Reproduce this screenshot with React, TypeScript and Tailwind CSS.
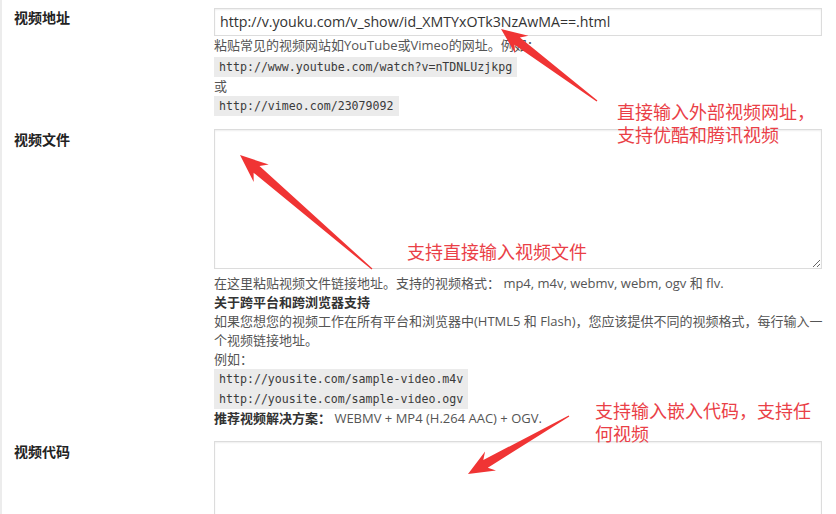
import React from "react";

type P = [number, number];

function arrowPoints(tail: P, tip: P, headLen: number, headHalf: number, shaftHalf: number): string {
  const dx = tip[0] - tail[0];
  const dy = tip[1] - tail[1];
  const len = Math.hypot(dx, dy);
  const ux = dx / len;
  const uy = dy / len;
  const nx = -uy;
  const ny = ux;
  const bx = tip[0] - ux * headLen;
  const by = tip[1] - uy * headLen;
  const bx2 = tip[0] - ux * (headLen * 0.78);
  const by2 = tip[1] - uy * (headLen * 0.78);
  const pts: P[] = [
    [tail[0] + nx * 0.6, tail[1] + ny * 0.6],
    [bx2 + nx * shaftHalf, by2 + ny * shaftHalf],
    [bx + nx * headHalf, by + ny * headHalf],
    [tip[0], tip[1]],
    [bx - nx * headHalf, by - ny * headHalf],
    [bx2 - nx * shaftHalf, by2 - ny * shaftHalf],
    [tail[0] - nx * 0.6, tail[1] - ny * 0.6],
  ];
  return pts.map((p) => `${p[0].toFixed(1)},${p[1].toFixed(1)}`).join(" ");
}

const arrows = [
  arrowPoints([595, 101], [499, 29], 26, 11, 4.5),
  arrowPoints([370, 269], [238, 155], 28, 11.5, 4.5),
  arrowPoints([567, 416], [466, 474], 26, 11, 4.5),
];

const bodyFont = { fontFamily: '"Open Sans", "Noto Sans CJK SC", sans-serif' };
const cjkFont = { fontFamily: '"Noto Sans CJK SC", "Open Sans", sans-serif' };

function Code({ children }: { children: React.ReactNode }) {
  return (
    <div className="h-[20px] leading-[20px] w-fit">
      <span
        className="block bg-[#ebebeb] px-[5px] h-[20px] leading-[20px] text-[11.6px] text-[#3a3a3a]"
        style={{ fontFamily: '"DejaVu Sans Mono", "Liberation Mono", monospace' }}
      >
        {children}
      </span>
    </div>
  );
}

function Label({ children }: { children: React.ReactNode }) {
  return (
    <div className="pl-[12px] text-[14px] font-bold text-[#222] leading-[20px]" style={cjkFont}>
      <div className="h-[20px] w-fit">{children}</div>
    </div>
  );
}

export default function App() {
  return (
    <div className="relative w-[836px] h-[514px] overflow-hidden bg-white border-l-2 border-[#ececec]" style={bodyFont}>
      {/* Row 1 */}
      <div className="grid grid-cols-[212px_608px] pt-[7px]">
        <Label>视频地址</Label>
        <div>
          <div className="mt-[1px] h-[28px] border border-[#dcdcdc] shadow-[inset_0_1px_2px_rgba(0,0,0,0.07)] pl-[5px] flex items-center text-[14.2px] text-[#333]">
            http://v.youku.com/v_show/id_XMTYxOTk3NzAwMA==.html
          </div>
          <div className="text-[13px] text-[#555] leading-[19px]">
            <div className="h-[19px] w-fit">粘贴常见的视频网站如YouTube或Vimeo的网址。例如：</div>
            <div className="mt-[2px]">
              <Code>http://www.youtube.com/watch?v=nTDNLUzjkpg</Code>
            </div>
            <div className="h-[19px] w-fit">或</div>
            <Code>http://vimeo.com/23079092</Code>
          </div>
        </div>
      </div>

      {/* Row 2 */}
      <div className="grid grid-cols-[212px_608px] pt-[13px]">
        <Label>视频文件</Label>
        <div>
          <textarea
            className="block w-[608px] h-[140px] border border-[#dcdcdc] shadow-[inset_0_1px_2px_rgba(0,0,0,0.07)] bg-white resize-y outline-none"
            defaultValue=""
          />
          <div className="text-[13px] text-[#555] leading-[19px] mt-[5px]">
            <div className="h-[19px] w-fit whitespace-nowrap">在这里粘贴视频文件链接地址。支持的视频格式： mp4, m4v, webmv, webm, ogv 和 flv.</div>
            <div className="h-[19px] w-fit font-bold text-[#333]">关于跨平台和跨浏览器支持</div>
            <div className="h-[19px] w-fit whitespace-nowrap">
              如果您想您的视频工作在所有平台和浏览器中(HTML5 和 Flash)，您应该提供不同的视频格式，每行输入一
            </div>
            <div className="h-[19px] w-fit">个视频链接地址。</div>
            <div className="h-[19px] w-fit">例如：</div>
            <Code>http://yousite.com/sample-video.m4v</Code>
            <Code>http://yousite.com/sample-video.ogv</Code>
            <div className="h-[19px] w-fit whitespace-nowrap">
              <span className="font-bold text-[#333]">推荐视频解决方案：</span> WEBMV + MP4 (H.264 AAC) + OGV.
            </div>
          </div>
        </div>
      </div>

      {/* Row 3 */}
      <div className="grid grid-cols-[212px_608px] pt-[13px]">
        <Label>视频代码</Label>
        <div>
          <textarea
            className="block w-[608px] h-[140px] border border-[#dcdcdc] shadow-[inset_0_1px_2px_rgba(0,0,0,0.07)] bg-white resize-y outline-none"
            defaultValue=""
          />
        </div>
      </div>

      {/* Annotations */}
      <div className="absolute left-[615px] top-[100px] text-[18px] leading-[23px] text-[#ea3f47]" style={cjkFont}>
        <div>直接输入外部视频网址，</div>
        <div>支持优酷和腾讯视频</div>
      </div>
      <div className="absolute left-[405px] top-[240px] text-[18px] leading-[23px] text-[#ea3f47]" style={cjkFont}>
        支持直接输入视频文件
      </div>
      <div className="absolute left-[593px] top-[399px] text-[18px] leading-[23px] text-[#ea3f47]" style={cjkFont}>
        <div>支持输入嵌入代码，支持任</div>
        <div>何视频</div>
      </div>

      <svg className="absolute inset-0 pointer-events-none" width="836" height="514" viewBox="0 0 836 514">
        {arrows.map((p, i) => (
          <polygon key={i} points={p} fill="#f03434" />
        ))}
      </svg>
    </div>
  );
}
